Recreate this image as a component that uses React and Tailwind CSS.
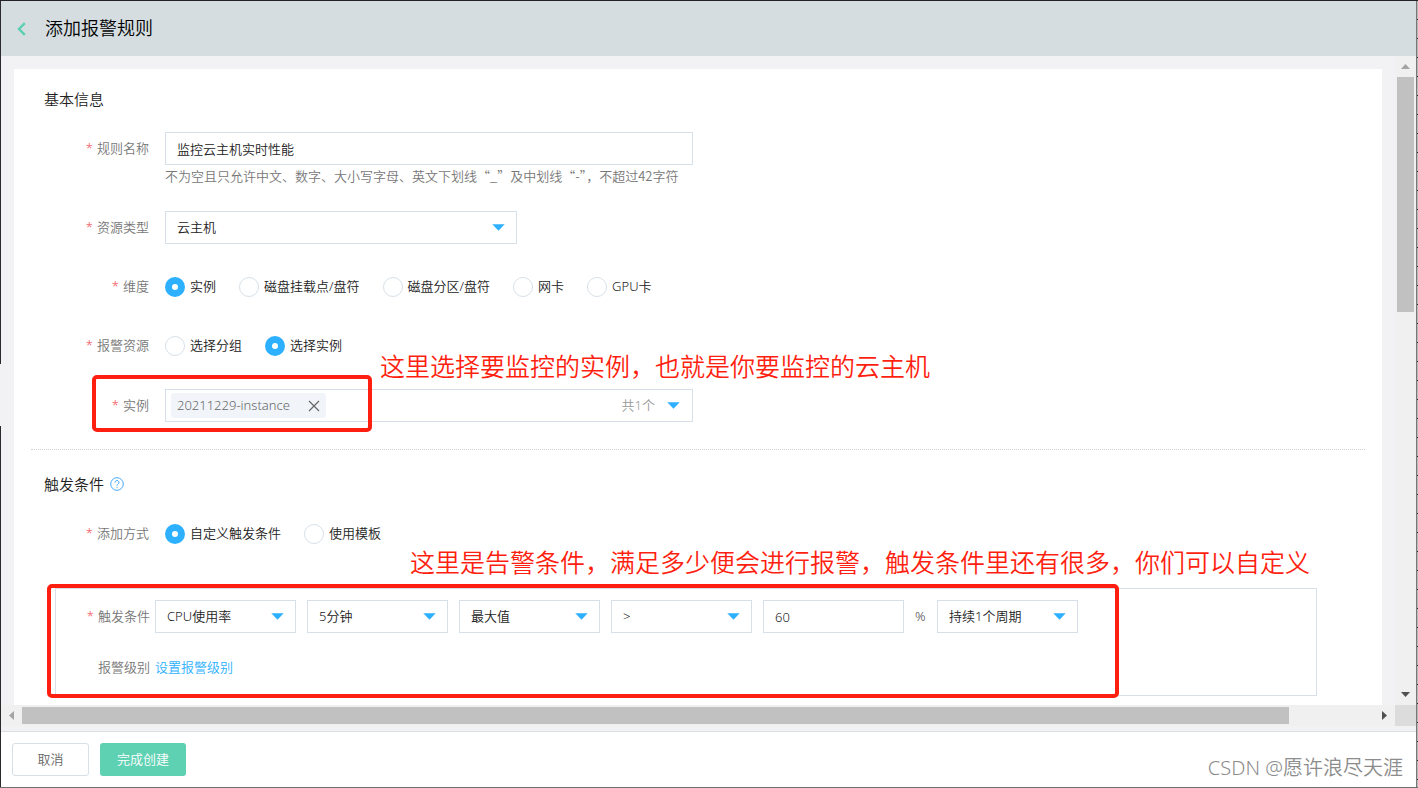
import { useState } from "react";

const METRIC_SELECTS = [
  { id: "metric", label: "监控指标", value: "CPU使用率" },
  { id: "period", label: "统计周期", value: "5分钟" },
  { id: "statistic", label: "统计方式", value: "最大值" },
  { id: "operator", label: "比较方式", value: ">" },
];

const DIMENSIONS = ["实例", "磁盘挂载点/盘符", "磁盘分区/盘符", "网卡", "GPU卡"];

const CaretDown = () => (
  <svg width="13" height="7" viewBox="0 0 13 7" aria-hidden="true">
    <path d="M0.3 0.3h12.4L6.5 6.8z" fill="#2db0ff" />
  </svg>
);

const Required = () => <span className="mr-1 text-[#f5515a]">*</span>;

/* =========================
   FORM PARTS
========================= */
const Row = ({ label, htmlFor, className, children }) => (
  <div className={`flex min-h-[33px] gap-4 ${className}`}>
    <label
      htmlFor={htmlFor}
      className="w-[118px] shrink-0 text-right leading-[33px] text-[#777]"
    >
      <Required />
      {label}
    </label>
    {children}
  </div>
);

const Select = ({ id, label, value, className }) => (
  <div className={`relative shrink-0 ${className}`}>
    <select
      id={id}
      aria-label={label}
      defaultValue={value}
      className="h-[33px] w-full appearance-none border border-[#d7e0e8] bg-white px-[11px] text-[#222]"
    >
      <option>{value}</option>
    </select>
    <span className="pointer-events-none absolute inset-y-0 right-3 flex items-center">
      <CaretDown />
    </span>
  </div>
);

const RadioGroup = ({ name, options, initial }) => {
  const [selected, setSelected] = useState(initial);

  return (
    <div className="flex items-center gap-[23px] text-[#222]">
      {options.map((option) => (
        <label key={option} className="flex items-center gap-[5px]">
          <input
            type="radio"
            name={name}
            checked={selected === option}
            onChange={() => setSelected(option)}
            className="size-5 appearance-none rounded-full border border-[#d7e0e8] bg-white checked:border-7 checked:border-[#2db0ff]"
          />
          {option}
        </label>
      ))}
    </div>
  );
};

/* =========================
   SCROLLBARS
========================= */
const VerticalScrollbar = () => (
  <div className="flex w-[21px] shrink-0 flex-col bg-[#f0f0f0] px-0.5">
    <div className="flex h-[21px] items-center justify-center">
      <svg width="9" height="5" viewBox="0 0 9 5">
        <path d="M0 5h9L4.5 0z" fill="#a3a3a3" />
      </svg>
    </div>
    <div className="flex-[235] bg-[#c1c1c1]" />
    <div className="flex-[372]" />
    <div className="flex h-[21px] items-center justify-center">
      <svg width="9" height="5" viewBox="0 0 9 5">
        <path d="M0 0h9L4.5 5z" fill="#505050" />
      </svg>
    </div>
  </div>
);

const HorizontalScrollbar = () => (
  <div className="flex h-[21px] shrink-0">
    <div className="flex flex-1 bg-[#f0f0f0] py-0.5">
      <div className="flex w-[21px] items-center justify-center">
        <svg width="5" height="9" viewBox="0 0 5 9">
          <path d="M5 0v9L0 4.5z" fill="#a3a3a3" />
        </svg>
      </div>
      <div className="flex-[1267] bg-[#c1c1c1]" />
      <div className="flex-[85]" />
      <div className="flex w-[21px] items-center justify-center">
        <svg width="5" height="9" viewBox="0 0 5 9">
          <path d="M0 0v9L5 4.5z" fill="#505050" />
        </svg>
      </div>
    </div>
    <div className="w-[21px] bg-[#dcdcdc]" />
  </div>
);

/* =========================
   SECTIONS
========================= */
const BasicInfo = () => (
  <section className="border-b border-dotted border-[#d0d0d0] pb-[27px]">
    <h2 className="pl-[13px] text-[15px] leading-7 text-[#222]">基本信息</h2>

    <Row label="规则名称" htmlFor="rule-name" className="mt-[19px]">
      <div className="w-[528px]">
        <input
          id="rule-name"
          type="text"
          defaultValue="监控云主机实时性能"
          className="block h-[33px] w-full border border-[#d7e0e8] px-[11px] text-[#222]"
        />
        <p
          lang="zh-CN"
          className="font-['Noto_Sans_CJK_SC',sans-serif] leading-[22px] whitespace-nowrap text-[#777]"
        >
          不为空且只允许中文、数字、大小写字母、英文下划线“_”及中划线“-”，不超过42字符
        </p>
      </div>
    </Row>

    <Row label="资源类型" htmlFor="resource-type" className="mt-6">
      <Select id="resource-type" value="云主机" className="w-[352px]" />
    </Row>

    <Row label="维度" className="mt-[26px]">
      <RadioGroup name="dimension" options={DIMENSIONS} initial="实例" />
    </Row>

    <Row label="报警资源" className="mt-[26px]">
      <RadioGroup
        name="resource"
        options={["选择分组", "选择实例"]}
        initial="选择实例"
      />
    </Row>

    <Row label="实例" className="mt-[27px]">
      <div className="flex w-[528px] items-center border border-[#d7e0e8] pr-3 pl-[5px]">
        <span className="flex h-[25px] w-[155px] items-center justify-between rounded-[3px] bg-[#f1f5fa] px-[6px] text-[#666]">
          20211229-instance
          <button type="button" aria-label="移除">
            <svg width="12" height="12" viewBox="0 0 12 12">
              <path
                d="M1 1l10 10M11 1L1 11"
                stroke="#666"
                strokeWidth="1.2"
                fill="none"
              />
            </svg>
          </button>
        </span>
        <span className="mr-3 ml-auto text-[#999]">共1个</span>
        <CaretDown />
      </div>
    </Row>
  </section>
);

const TriggerCondition = () => (
  <section className="pt-5">
    <h2 className="flex items-center gap-[6px] pl-[13px] text-[15px] leading-7 text-[#222]">
      触发条件
      <svg width="14" height="14" viewBox="0 0 14 14" fill="none" stroke="#4aa8f5">
        <circle cx="7" cy="7" r="6.3" />
        <path d="M5 5.6a2 2 0 1 1 3 1.6c-.7.4-1 .7-1 1.4M7 9.7v1.1" />
      </svg>
    </h2>

    <Row label="添加方式" className="mt-[19px]">
      <RadioGroup
        name="mode"
        options={["自定义触发条件", "使用模板"]}
        initial="自定义触发条件"
      />
    </Row>

    <div className="mt-[38px] mr-12 ml-6 border border-[#d7e0e8] pt-[11px] pb-[17px]">
      <div className="flex items-center gap-[5px]">
        <label htmlFor="metric" className="w-[94px] shrink-0 text-right text-[#777]">
          <Required />
          触发条件
        </label>
        <div className="flex items-center gap-[11px]">
          {METRIC_SELECTS.map((item) => (
            <Select key={item.id} {...item} className="w-[141px]" />
          ))}
          <input
            type="text"
            aria-label="阈值"
            defaultValue="60"
            className="h-[33px] w-[141px] border border-[#d7e0e8] px-[11px] text-[#222]"
          />
          <span className="w-[11px] text-[#444]">%</span>
          <Select
            id="duration"
            label="持续周期"
            value="持续1个周期"
            className="w-[141px]"
          />
        </div>
      </div>

      <div className="mt-[23px] flex gap-[5px] leading-[22px]">
        <span className="w-[94px] text-right text-[#777]">报警级别</span>
        <a href="#level" className="text-[#2db0ff]">
          设置报警级别
        </a>
      </div>
    </div>
  </section>
);

/* =========================
   RED NOTES OVER THE FORM
========================= */
const Notes = () => (
  <div className="pointer-events-none text-[25px] leading-9 whitespace-nowrap text-[#ff1f10]">
    <div className="absolute top-[306px] left-[78px] h-[57px] w-[280px] rounded-[5px] border-4 border-[#ff1f10]" />
    <p className="absolute top-[279px] left-[366px]">
      这里选择要监控的实例，也就是你要监控的云主机
    </p>
    <div className="absolute top-[515px] left-[33px] h-[114px] w-[1072px] rounded-[5px] border-4 border-[#ff1f10]" />
    <p className="absolute top-[475px] left-[396px]">
      这里是告警条件，满足多少便会进行报警，触发条件里还有很多，你们可以自定义
    </p>
  </div>
);

const App = () => {
  return (
    <div className="flex h-screen overflow-hidden border-t border-b border-t-[#222226] border-b-[#707070] bg-white font-['Noto_Sans','Noto_Sans_CJK_SC',sans-serif] text-[13px] font-[350]">
      {/* LEFT EDGE */}
      <div className="flex w-px shrink-0 flex-col bg-[#f2f2f5]">
        <div className="flex-[363] bg-[#2a2a2e]" />
        <div className="flex-[62]" />
        <div className="flex-[361] bg-[#2a2a2e]" />
      </div>

      <div className="flex min-w-0 flex-1 flex-col">
        <header className="flex h-[55px] shrink-0 items-center gap-[19px] bg-[#d5dde0] pl-4">
          <button type="button" aria-label="返回">
            <svg width="9" height="14" viewBox="0 0 9 14">
              <path
                d="M7.8 1.2L2 7l5.8 5.8"
                stroke="#5bcfb1"
                strokeWidth="2.4"
                fill="none"
              />
            </svg>
          </button>
          <h1 className="text-[18px] text-black">添加报警规则</h1>
        </header>

        <div className="flex min-h-0 flex-1 bg-[#f2f2f5]">
          <main className="relative mt-[13px] mr-[13px] ml-[13px] min-w-0 flex-1 overflow-hidden bg-white px-[17px] pt-4">
            <BasicInfo />
            <TriggerCondition />
            <Notes />
          </main>
          <VerticalScrollbar />
        </div>
        <HorizontalScrollbar />
        <div className="h-[5px] shrink-0 bg-[#f2f2f5]" />

        <footer className="flex shrink-0 items-center gap-[11px] border-t border-[#dadfe3] py-[11px] pr-[13px] pl-[11px]">
          <button
            type="button"
            className="h-[33px] w-[77px] rounded-[3px] border border-[#d7e0e8] text-[#666]"
          >
            取消
          </button>
          <button
            type="button"
            className="h-[33px] w-[86px] rounded-[3px] bg-[#5fd1b3] text-white"
          >
            完成创建
          </button>
          <span className="ml-auto self-end text-[20px] leading-4 text-[#8c8c8c]">
            CSDN @愿许浪尽天涯
          </span>
        </footer>
      </div>

      {/* RIGHT EDGE */}
      <div className="w-0.5 shrink-0 border-l border-[#777] bg-[repeating-linear-gradient(#b8b8b8_0_18px,#333_18px_19px)]" />
    </div>
  );
};

export default App;
